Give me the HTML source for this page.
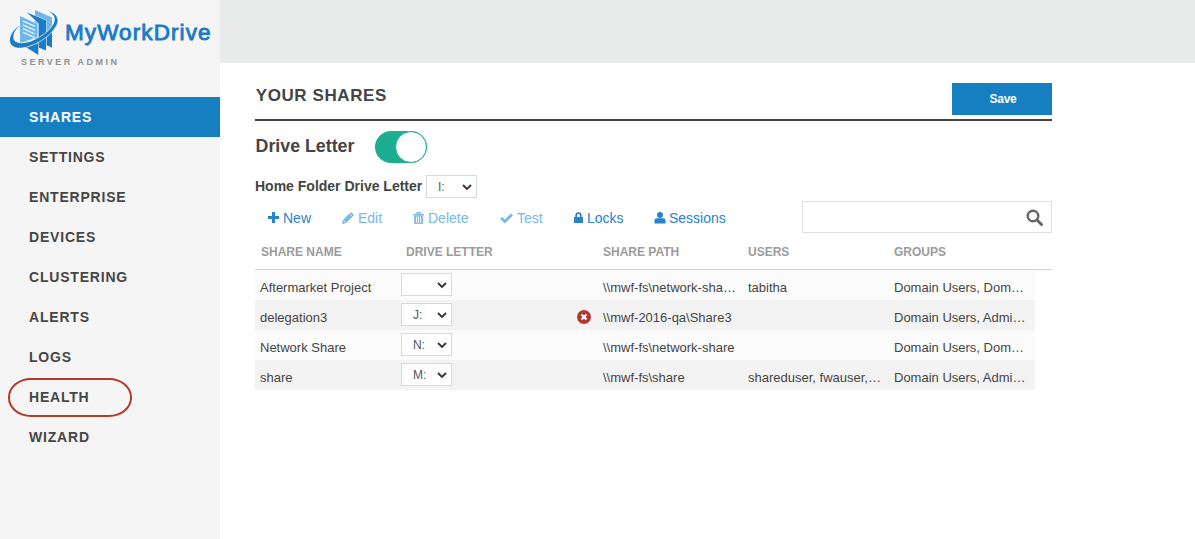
<!DOCTYPE html>
<html><head><meta charset="utf-8">
<style>
*{box-sizing:border-box}
html,body{margin:0;padding:0;width:1195px;height:539px;overflow:hidden;background:#fff;font-family:"Liberation Sans",sans-serif;}
#side{position:absolute;left:0;top:0;width:220px;height:539px;background:#f5f5f5;}
#topbar{position:absolute;left:220px;top:0;width:975px;height:63px;background:#e9ebeb;}
.abs{position:absolute;white-space:nowrap;}
.logo-text{left:65px;top:20px;font-size:22.5px;font-weight:normal;-webkit-text-stroke:0.9px #1a7bc4;color:#1a7bc4;letter-spacing:1.1px}
.sub{left:21px;top:57px;font-size:9px;font-weight:bold;color:#909090;letter-spacing:2.5px}
.nav{position:absolute;left:0;width:220px;height:40px;font-size:14px;font-weight:bold;color:#464646;letter-spacing:0.8px;padding-left:29px;line-height:40px}
.nav.act{background:#167fc1;color:#fff}
#ell{position:absolute;left:7.5px;top:378px;width:124.5px;height:38.5px;border:2.3px solid #b03a2c;border-radius:23px/19px}
.h1{left:255.7px;top:85.6px;font-size:17px;font-weight:bold;color:#444;letter-spacing:0.6px}
#save{position:absolute;left:952px;top:83px;width:100px;height:32px;background:#167fc1;color:#fff;font-size:12px;font-weight:bold;text-align:center;line-height:32px;letter-spacing:-0.25px;padding-left:2px}
#rule{position:absolute;left:255px;top:119px;width:797px;height:2px;background:#444}
.dl{left:255.6px;top:135.6px;font-size:17.8px;font-weight:bold;color:#444}
#tog{position:absolute;left:375px;top:131px;width:52px;height:32px;border-radius:16px;background:#1bae91}
#knob{position:absolute;left:395px;top:131px;width:32px;height:32px;border-radius:50%;background:#fff;border:1px solid #1bae91}
.hf{left:255px;top:178px;font-size:14px;font-weight:bold;color:#444}
.sel{position:absolute;width:51px;height:23px;border:1px solid #d3dbe0;background:#fff}
.sel span{position:absolute;left:11px;top:4px;font-size:12px;color:#555}
.sel svg{position:absolute;right:4px;top:8px}
.tb{top:210px;font-size:14px;color:#2a82cc}
.tb.dis{color:#7ab8e6}
#search{position:absolute;left:802px;top:201px;width:250px;height:32px;border:1px solid #dde0e0;background:#fff}
.th{top:245px;font-size:12px;font-weight:bold;color:#9b9b9b}
#thline{position:absolute;left:255px;top:269px;width:797px;height:1px;background:#d4d4d4}
.row{position:absolute;left:255px;width:780px;height:30px;background:#fbfbfb}
.row.g{background:#f3f3f3}
.td{font-size:13px;color:#444}
</style></head><body>
<div id="side"></div>
<div id="topbar"></div>
<svg class="abs" style="left:0;top:0" width="64" height="60" viewBox="0 0 64 60">
  <polygon points="35,10 52,17.5 52,47.5 35,40" fill="#6cb8ea"/>
  <polygon points="46.8,34 52,30 52,47.5 46.8,45.3" fill="#1b7bc4"/>
  <polygon points="27,12.5 46,20.4 46,50.5 38.8,47.5 38.8,23.5" fill="#1b7bc4" stroke="#f4f4f4" stroke-width="0.8" paint-order="stroke"/>
  <polygon points="20,16 37.4,24 37.4,37 20,43.6" fill="#6cb8ea" stroke="#f4f4f4" stroke-width="1" paint-order="stroke"/>
  <g stroke="#fff" stroke-width="1.1"><line x1="23" y1="21" x2="34.7" y2="26.3"/><line x1="23" y1="24.9" x2="34.7" y2="30.2"/><line x1="23" y1="28.6" x2="34.7" y2="33.9"/><line x1="23" y1="32.3" x2="34.7" y2="37.6"/></g>
  <polygon points="25.8,47 38.3,55 38.3,43" fill="#1b7bc4"/>
  <path d="M49,11.5 C56,13 60,19 56,26 C51,35 38,44 26,47 C16,49.5 9,46 10,39 C11,33 15,29 19.5,25.5 C15,30 12,35 14,40 C16,44 24,44 32,41 C42,37 51,30 54,23 C56,18 54,14 49,11.5 Z" fill="#1b7bc4" stroke="#f4f4f4" stroke-width="1.2" paint-order="stroke"/>
</svg>
<div class="abs logo-text">MyWorkDrive</div>
<div class="abs sub">SERVER ADMIN</div>

<div class="nav act" style="top:97px">SHARES</div>
<div class="nav" style="top:137px">SETTINGS</div>
<div class="nav" style="top:177px">ENTERPRISE</div>
<div class="nav" style="top:217px">DEVICES</div>
<div class="nav" style="top:257px">CLUSTERING</div>
<div class="nav" style="top:297px">ALERTS</div>
<div class="nav" style="top:337px">LOGS</div>
<div class="nav" style="top:377px">HEALTH</div>
<div class="nav" style="top:417px">WIZARD</div>
<div id="ell"></div>

<div class="abs h1">YOUR SHARES</div>
<div id="save">Save</div>
<div id="rule"></div>
<div class="abs dl">Drive Letter</div>
<div id="tog"></div><div id="knob"></div>
<div class="abs hf">Home Folder Drive Letter</div>
<div class="sel" style="left:426px;top:175px"><span>I:</span><svg width="10" height="7" viewBox="0 0 10 7"><path d="M1,1 L5,5 L9,1" fill="none" stroke="#333" stroke-width="1.8"/></svg></div>

<svg class="abs" style="left:268px;top:212px" width="11" height="11" viewBox="0 0 11 11"><path d="M4,0H7V4H11V7H7V11H4V7H0V4H4Z" fill="#2a82cc"/></svg>
<div class="abs tb" style="left:283px">New</div>
<svg class="abs" style="left:341px;top:211px" width="14" height="14" viewBox="0 0 14 14"><path d="M1,13 L1.9,8.9 L9.9,0.9 L13.1,4.1 L5.1,12.1 Z" fill="#7ab8e6"/><path d="M8.3,2.5 L11.5,5.7 M2.6,9.6 L4.4,11.4" stroke="#fff" stroke-width="0.8"/></svg>
<div class="abs tb dis" style="left:358px">Edit</div>
<svg class="abs" style="left:413px;top:211px" width="11" height="13" viewBox="0 0 11 13"><path d="M4.2,3.2V1.6H7.1V3.2" fill="none" stroke="#7ab8e6" stroke-width="1.2"/><rect x="0.3" y="2.9" width="10.6" height="1.6" fill="#7ab8e6"/><rect x="1.2" y="4.5" width="8.7" height="8.4" fill="#7ab8e6"/><path d="M3.7,5.4V12M5.6,5.4V12M7.6,5.4V12" stroke="#fff" stroke-width="0.9"/></svg>
<div class="abs tb dis" style="left:428px">Delete</div>
<svg class="abs" style="left:500px;top:213px" width="13" height="10" viewBox="0 0 13 10"><path d="M1,4.8 L4.8,8.6 L12,1.4" fill="none" stroke="#7ab8e6" stroke-width="2.8"/></svg>
<div class="abs tb dis" style="left:517px">Test</div>
<svg class="abs" style="left:574px;top:212px" width="9" height="11" viewBox="0 0 9 11"><path d="M2.2,5.5V3.5A2.3,2.3 0 0 1 6.8,3.5V5.5" fill="none" stroke="#2a82cc" stroke-width="1.8"/><rect x="0" y="5" width="9" height="6" fill="#2a82cc"/></svg>
<div class="abs tb" style="left:587px">Locks</div>
<svg class="abs" style="left:654px;top:212px" width="12" height="12" viewBox="0 0 12 12"><circle cx="6" cy="3" r="3" fill="#2a82cc"/><path d="M0.5,11.5V8.5Q0.5,6.3 2.7,6.3H9.3Q11.5,6.3 11.5,8.5V11.5Z" fill="#2a82cc"/></svg>
<div class="abs tb" style="left:669px">Sessions</div>
<div id="search"><svg style="position:absolute;left:223px;top:7px" width="18" height="17" viewBox="0 0 18 17"><circle cx="7" cy="7" r="5.3" fill="none" stroke="#666" stroke-width="2.4"/><line x1="11" y1="11" x2="15.5" y2="15.5" stroke="#666" stroke-width="3" stroke-linecap="round"/></svg></div>

<div class="abs th" style="left:261px">SHARE NAME</div>
<div class="abs th" style="left:406px">DRIVE LETTER</div>
<div class="abs th" style="left:603px">SHARE PATH</div>
<div class="abs th" style="left:748px">USERS</div>
<div class="abs th" style="left:894px">GROUPS</div>
<div id="thline"></div>

<div class="row" style="top:270px"></div>
<div class="row g" style="top:300px"></div>
<div class="row" style="top:330px"></div>
<div class="row g" style="top:360px"></div>
<div class="abs td" style="left:260px;top:280px">Aftermarket Project</div>
<div class="sel" style="left:401px;top:273px"><span></span><svg width="10" height="7" viewBox="0 0 10 7"><path d="M1,1 L5,5 L9,1" fill="none" stroke="#333" stroke-width="1.8"/></svg></div>
<div class="abs td" style="left:603px;top:280px">\\mwf-fs\network-sha…</div>
<div class="abs td" style="left:748px;top:280px">tabitha</div>
<div class="abs td" style="left:894px;top:280px">Domain Users, Dom…</div>
<div class="abs td" style="left:260px;top:310px">delegation3</div>
<div class="sel" style="left:401px;top:303px"><span>J:</span><svg width="10" height="7" viewBox="0 0 10 7"><path d="M1,1 L5,5 L9,1" fill="none" stroke="#333" stroke-width="1.8"/></svg></div>
<svg class="abs" style="left:577px;top:310px" width="14" height="14" viewBox="0 0 14 14"><circle cx="7" cy="7" r="7" fill="#b0392f"/><path d="M4.5,4.5 L9.5,9.5 M9.5,4.5 L4.5,9.5" stroke="#fff" stroke-width="2"/></svg>
<div class="abs td" style="left:603px;top:310px">\\mwf-2016-qa\Share3</div>
<div class="abs td" style="left:894px;top:310px">Domain Users, Admi…</div>
<div class="abs td" style="left:260px;top:340px">Network Share</div>
<div class="sel" style="left:401px;top:333px"><span>N:</span><svg width="10" height="7" viewBox="0 0 10 7"><path d="M1,1 L5,5 L9,1" fill="none" stroke="#333" stroke-width="1.8"/></svg></div>
<div class="abs td" style="left:603px;top:340px">\\mwf-fs\network-share</div>
<div class="abs td" style="left:894px;top:340px">Domain Users, Dom…</div>
<div class="abs td" style="left:260px;top:370px">share</div>
<div class="sel" style="left:401px;top:363px"><span>M:</span><svg width="10" height="7" viewBox="0 0 10 7"><path d="M1,1 L5,5 L9,1" fill="none" stroke="#333" stroke-width="1.8"/></svg></div>
<div class="abs td" style="left:603px;top:370px">\\mwf-fs\share</div>
<div class="abs td" style="left:748px;top:370px">shareduser, fwauser,…</div>
<div class="abs td" style="left:894px;top:370px">Domain Users, Admi…</div>
</body></html>
